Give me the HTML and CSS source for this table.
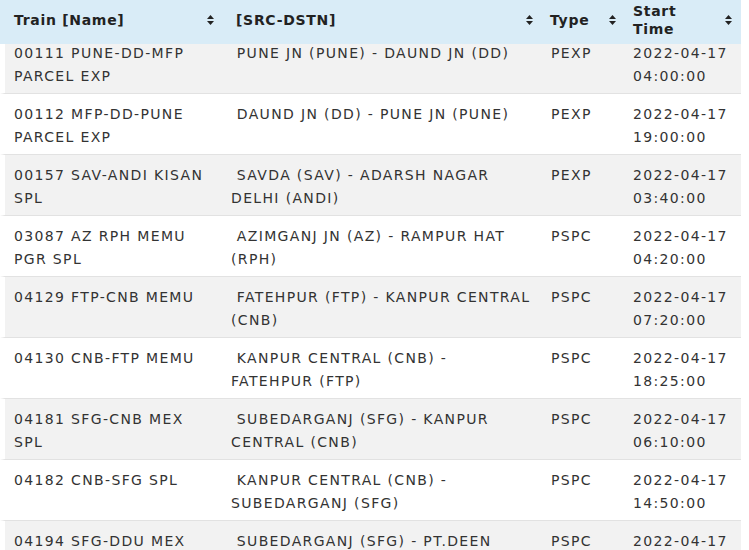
FILE: index.html
```html
<!DOCTYPE html>
<html lang="en">
<head>
<meta charset="utf-8">
<title>Trains</title>
<link rel="stylesheet" href="styles.css">
</head>
<body>
<div class="grid">
  <table class="head">
    <colgroup><col class="c1"><col class="c2"><col class="c3"><col class="c4"></colgroup>
    <thead>
      <tr>
        <th class="h1"><div class="hc"><span>Train [Name]</span><svg class="sort" viewBox="0 0 7 10"><path d="M0 4 L3.5 0 L7 4 Z M0 6 L3.5 10 L7 6 Z"/></svg></div></th>
        <th class="h2"><div class="hc"><span>[SRC-DSTN]</span><svg class="sort" viewBox="0 0 7 10"><path d="M0 4 L3.5 0 L7 4 Z M0 6 L3.5 10 L7 6 Z"/></svg></div></th>
        <th><div class="hc"><span>Type</span><svg class="sort" viewBox="0 0 7 10"><path d="M0 4 L3.5 0 L7 4 Z M0 6 L3.5 10 L7 6 Z"/></svg></div></th>
        <th><div class="hc"><span>Start<br>Time</span><svg class="sort" viewBox="0 0 7 10"><path d="M0 4 L3.5 0 L7 4 Z M0 6 L3.5 10 L7 6 Z"/></svg></div></th>
      </tr>
    </thead>
  </table>
  <div class="scroll">
    <table class="body">
      <colgroup><col class="c1"><col class="c2"><col class="c3"><col class="c4"></colgroup>
      <tbody>
        <tr><td>00111 PUNE-DD-MFP PARCEL EXP</td><td>&nbsp;PUNE JN (PUNE) - DAUND JN (DD)</td><td>PEXP</td><td>2022-04-17 04:00:00</td></tr>
        <tr><td>00112 MFP-DD-PUNE PARCEL EXP</td><td>&nbsp;DAUND JN (DD) - PUNE JN (PUNE)</td><td>PEXP</td><td>2022-04-17 19:00:00</td></tr>
        <tr><td>00157 SAV-ANDI KISAN SPL</td><td>&nbsp;SAVDA (SAV) - ADARSH NAGAR DELHI (ANDI)</td><td>PEXP</td><td>2022-04-17 03:40:00</td></tr>
        <tr><td>03087 AZ RPH MEMU PGR SPL</td><td>&nbsp;AZIMGANJ JN (AZ) - RAMPUR HAT (RPH)</td><td>PSPC</td><td>2022-04-17 04:20:00</td></tr>
        <tr><td>04129 FTP-CNB MEMU</td><td>&nbsp;FATEHPUR (FTP) - KANPUR CENTRAL (CNB)</td><td>PSPC</td><td>2022-04-17 07:20:00</td></tr>
        <tr><td>04130 CNB-FTP MEMU</td><td>&nbsp;KANPUR CENTRAL (CNB) - FATEHPUR (FTP)</td><td>PSPC</td><td>2022-04-17 18:25:00</td></tr>
        <tr><td>04181 SFG-CNB MEX SPL</td><td>&nbsp;SUBEDARGANJ (SFG) - KANPUR CENTRAL (CNB)</td><td>PSPC</td><td>2022-04-17 06:10:00</td></tr>
        <tr><td>04182 CNB-SFG SPL</td><td>&nbsp;KANPUR CENTRAL (CNB) - SUBEDARGANJ (SFG)</td><td>PSPC</td><td>2022-04-17 14:50:00</td></tr>
        <tr><td>04194 SFG-DDU MEX SPL</td><td>&nbsp;SUBEDARGANJ (SFG) - PT.DEEN DAYAL UPADHYAYA JN (DDU)</td><td>PSPC</td><td>2022-04-17 08:30:00</td></tr>
      </tbody>
    </table>
  </div>
</div>
</body>
</html>
```
FILE: styles.css
```css
html, body {
  margin: 0;
  padding: 0;
  background: #fff;
}
body {
  font-family: "DejaVu Sans", Verdana, sans-serif;
  color: #333;
  height: 550px;
  overflow: hidden;
}
.grid {
  width: 741px;
}
table {
  width: 741px;
  table-layout: fixed;
  border-collapse: separate;
  border-spacing: 0;
}
.c1 { width: 223px; }
.c2 { width: 319px; }
.c3 { width: 83px; }
.c4 { width: 116px; }

.head th {
  background: #d9ecf7;
  height: 36px;
  padding: 2px 9px 6px 8px;
  font-size: 14px;
  font-weight: bold;
  letter-spacing: 0.7px;
  line-height: 18px;
  color: #222;
  text-align: left;
  vertical-align: middle;
}
.head th.h1 { padding-left: 14px; }
.head th.h2 { padding-left: 13px; }
.hc {
  display: flex;
  align-items: center;
  justify-content: space-between;
  gap: 4px;
}
.sort {
  width: 7px;
  height: 10px;
  flex: none;
  fill: #222;
}
.scroll {
  height: 506px;
  overflow: hidden;
}
.body {
  margin-top: -11px;
}
.body td {
  font-size: 14px;
  letter-spacing: 1.35px;
  line-height: 23px;
  padding: 9px 8px 5px 8px;
  vertical-align: top;
  border-bottom: 1px solid #e2e2e2;
  height: 46px;
}
.body td:first-child {
  border-left: 5px solid #fff;
  padding-left: 9px;
}
.body td:nth-child(3) {
  padding-left: 9px;
}
.body tr:nth-child(odd) td {
  background: #f2f2f2;
}
```
